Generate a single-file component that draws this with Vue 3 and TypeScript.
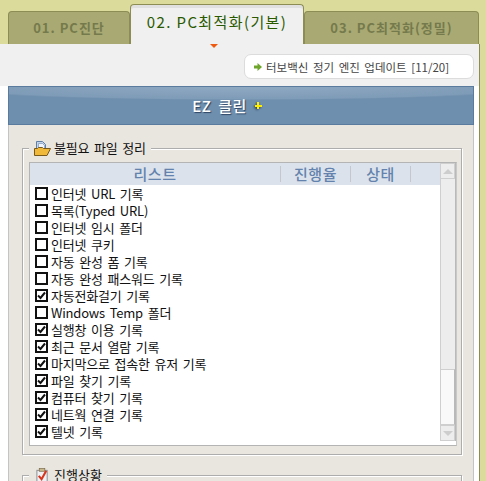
<template>
  <div class="page">
    <div class="tabs">
      <div v-for="t in tabs" :key="t.label" class="tab" :class="{ on: t.on }" :style="{ width: t.w + 'px' }">
        <span>{{ t.label }}</span>
        <i v-if="t.on" class="pointer"></i>
      </div>
    </div>
    <div class="top">
      <div class="notice">
        <svg width="8" height="8" viewBox="0 0 8 8"><path d="M0 2.500h3.500V0L8 4 3.500 8V5.500H0z" fill="#6fa52c" /></svg>
        <span>터보백신 정기 엔진 업데이트 [11/20]</span>
      </div>
    </div>
    <div class="main">
      <div class="card">
        <div class="title">
          <span>EZ 클린</span>
          <b class="plus"></b>
        </div>
        <div class="body">
          <fieldset class="group">
            <legend>
              <svg width="17" height="16" viewBox="0 0 17 16">
                <path d="M2.500 1.500h6l3 3v6h-9z" fill="#c4d4e8" stroke="#5f7ea6" />
                <path d="M4.500 3.500h4l2 2v5h-6z" fill="#f1f5fa" stroke="#7d97b8" stroke-width=".7" />
                <path d="M.5 15.500V8.500h3l1-1h4l1 1h7l-3.500 7z" fill="#f1b93a" stroke="#7a5a18" />
              </svg>
              <span>불필요 파일 정리</span>
            </legend>
            <div class="list">
              <div class="columns">
                <div class="rows">
                  <div class="head">
                    <span class="c1">리스트</span>
                    <span class="c2">진행율</span>
                    <span class="c3">상태</span>
                    <span class="c4"></span>
                  </div>
                  <label v-for="r in rows" :key="r.name" class="row">
                    <span class="check">
                      <svg v-if="r.on" width="9" height="9" viewBox="0 0 9 9"><path d="M1 4.500l2.500 2.500L8 1.500" fill="none" stroke="#111" stroke-width="2" /></svg>
                    </span>
                    <span>{{ r.name }}</span>
                  </label>
                </div>
                <div class="scroll">
                  <div class="btn"><i class="up"></i></div>
                  <div class="track"></div>
                  <div class="thumb"></div>
                  <div class="btn"><i class="dn"></i></div>
                </div>
              </div>
            </div>
          </fieldset>
          <fieldset class="group second">
            <legend>
              <svg width="17" height="14" viewBox="-1 0 17 15">
                <rect x="1.500" y="2.500" width="11" height="12" fill="#eef0f4" stroke="#8a8a90" />
                <rect x="4" y="0.500" width="6" height="3" fill="#c9b98a" stroke="#77684a" stroke-width=".7" />
                <path d="M3.500 8.500l3 3.500 5-9" fill="none" stroke="#d8341c" stroke-width="2.200" />
              </svg>
              <span>진행상황</span>
            </legend>
          </fieldset>
        </div>
      </div>
    </div>
  </div>
</template>

<script setup lang="ts">
const tabs = [
  { label: '01. PC진단', w: 122, on: false },
  { label: '02. PC최적화(기본)', w: 174, on: true },
  { label: '03. PC최적화(정밀)', w: 175, on: false }
]

const rows = [
  { name: '인터넷 URL 기록', on: false },
  { name: '목록(Typed URL)', on: false },
  { name: '인터넷 임시 폴더', on: false },
  { name: '인터넷 쿠키', on: false },
  { name: '자동 완성 폼 기록', on: false },
  { name: '자동 완성 패스워드 기록', on: false },
  { name: '자동전화걸기 기록', on: true },
  { name: 'Windows Temp 폴더', on: false },
  { name: '실행창 이용 기록', on: true },
  { name: '최근 문서 열람 기록', on: true },
  { name: '마지막으로 접속한 유저 기록', on: true },
  { name: '파일 찾기 기록', on: true },
  { name: '컴퓨터 찾기 기록', on: true },
  { name: '네트웍 연결 기록', on: true },
  { name: '텔넷 기록', on: true }
]
</script>

<style>
html, body {
  margin: 0;
  background: #fff;
}
</style>

<style scoped>
.page {
  width: 486px;
  height: 481px;
  overflow: hidden;
  background: #dbdb9c;
  font-family: "Noto Sans CJK KR", "Noto Sans", sans-serif;
  font-size: 13px;
  color: #222;
}

.tabs {
  display: flex;
  align-items: flex-end;
  height: 44px;
  padding-left: 8px;
}

.tab {
  position: relative;
  box-sizing: border-box;
  height: 33px;
  padding-top: 7px;
  text-align: center;
  background: #a9a973;
  border: 1px solid #8c8c55;
  border-bottom: 0;
  border-radius: 4px 4px 0 0;
  color: #757a4c;
  font-weight: bold;
  font-size: 13px;
  line-height: 18px;
  letter-spacing: 1px;
}

.tab.on {
  height: 40px;
  padding-top: 7px;
  background: #f0f0f0;
  box-shadow: inset 0 3px 0 #e0e0e0;
  color: #2a5a00;
  font-weight: 400;
  font-size: 15px;
  line-height: 20px;
  letter-spacing: 1.4px;
}

.pointer {
  position: absolute;
  left: 79px;
  bottom: -4px;
  z-index: 1;
  border-top: 4px solid #ee5a10;
  border-left: 4px solid transparent;
  border-right: 4px solid transparent;
}

.top {
  box-sizing: border-box;
  width: 480px;
  height: 42px;
  padding: 10px 5px 0 0;
  display: flex;
  justify-content: flex-end;
  background: #f0f0f0;
  border-right: 1px solid #8c8c55;
}

.notice {
  box-sizing: border-box;
  width: 230px;
  height: 25px;
  display: flex;
  align-items: center;
  gap: 4px;
  padding-left: 9px;
  background: #fff;
  border: 1px solid #dcdcdc;
  border-radius: 7px;
  color: #444;
  font-size: 11.5px;
  word-spacing: 2px;
  white-space: nowrap;
}

.main {
  display: flex;
  height: 395px;
  width: 480px;
  box-sizing: border-box;
  padding-left: 8px;
  background: #fff;
  border-right: 1px solid #8c8c55;
}

.card {
  box-sizing: border-box;
  width: 466px;
  flex: none;
}

.title {
  box-sizing: border-box;
  height: 39px;
  display: flex;
  align-items: center;
  justify-content: center;
  gap: 8px;
  padding-right: 28px;
  background:
    radial-gradient(ellipse 300px 13px at 50% 0, #8fa9c2 0, #7e9bb7 92%, transparent 100%),
    #6f8fae;
  border: 1px solid #5a7a9e;
  color: #fff;
  font-weight: 500;
  font-size: 15px;
  letter-spacing: 0.5px;
  word-spacing: 3px;
  text-shadow: 1px 1px 1px #2c4463;
}

.plus {
  width: 7px;
  height: 7px;
  background:
    linear-gradient(#ffee00, #ffee00) center / 7px 2px no-repeat,
    linear-gradient(#ffee00, #ffee00) center / 2px 7px no-repeat;
  filter: drop-shadow(-1px 1px 1px #2c4463);
}

.body {
  height: 356px;
  padding: 14px 0 0 13px;
  background: #e9e6df;
  border-left: 1px solid #c4c4c4;
  border-right: 1px solid #c4c4c4;
}

.group {
  box-sizing: border-box;
  width: 440px;
  min-width: 0;
  height: 316px;
  margin: 0;
  padding: 5px 0 0 6px;
  border: 1px solid #adadad;
  box-shadow: inset 1px 1px 0 #fff, 1px 1px 0 #fff;
}

.group legend {
  display: flex;
  align-items: center;
  gap: 3px;
  height: 18px;
  padding: 0 5px;
  background: #e9e6df;
  color: #111;
  line-height: 18px;
  letter-spacing: -0.2px;
  word-spacing: 2px;
}

.second {
  height: 30px;
  margin-top: 14px;
}

.group.second legend {
  height: 12px;
  line-height: 12px;
  letter-spacing: 0;
}

.list {
  box-sizing: border-box;
  width: 428px;
  height: 284px;
  background: #fff;
  border: 1px solid #b4b4b4;
  border-right-color: #c8c8c8;
}

.columns {
  display: flex;
  height: 100%;
}

.rows {
  flex: 1;
  min-width: 0;
  padding-left: 1px;
}

.head {
  display: flex;
  height: 22px;
  margin-left: -1px;
  align-items: center;
  background: #dbe2eb;
  color: #6382ad;
  font-size: 15px;
  font-weight: 500;
  text-align: center;
  letter-spacing: 0.5px;
}

.head span {
  height: 16px;
  line-height: 16px;
  box-sizing: border-box;
  border-right: 1px solid #c4c8cc;
}

.c1 { width: 251px; }
.c2 { width: 70px; }
.c3 { width: 60px; }
.c4 { flex: 1; border-right: 0 !important; }

.row {
  display: flex;
  align-items: center;
  gap: 3px;
  height: 17px;
  padding-left: 4px;
  color: #111;
  line-height: 17px;
  white-space: nowrap;
  letter-spacing: -0.2px;
  word-spacing: 2px;
}

.check {
  box-sizing: border-box;
  width: 13px;
  height: 13px;
  display: flex;
  align-items: center;
  justify-content: center;
  background: #fff;
  border: 2px solid #111;
}

.scroll {
  box-sizing: border-box;
  width: 16px;
  height: 278px;
  display: flex;
  flex-direction: column;
  flex: none;
  background: #ededed;
  border-right: 1px solid #b9b9b9;
}

.btn {
  box-sizing: border-box;
  height: 16px;
  display: flex;
  align-items: center;
  justify-content: center;
  background: #ededed;
  border: 1px solid #cfcfcf;
  flex: none;
}

.track {
  height: 190px;
  flex: none;
  border-left: 1px solid #cfcfcf;
}

.thumb {
  box-sizing: border-box;
  height: 56px;
  flex: none;
  background: #f9f9f9;
  border: 1px solid #cfcfcf;
  border-right-color: #b9b9b9;
}

.up {
  border-bottom: 5px solid #cdcdcd;
  border-left: 5px solid transparent;
  border-right: 5px solid transparent;
}

.dn {
  border-top: 5px solid #cdcdcd;
  border-left: 5px solid transparent;
  border-right: 5px solid transparent;
}
</style>
